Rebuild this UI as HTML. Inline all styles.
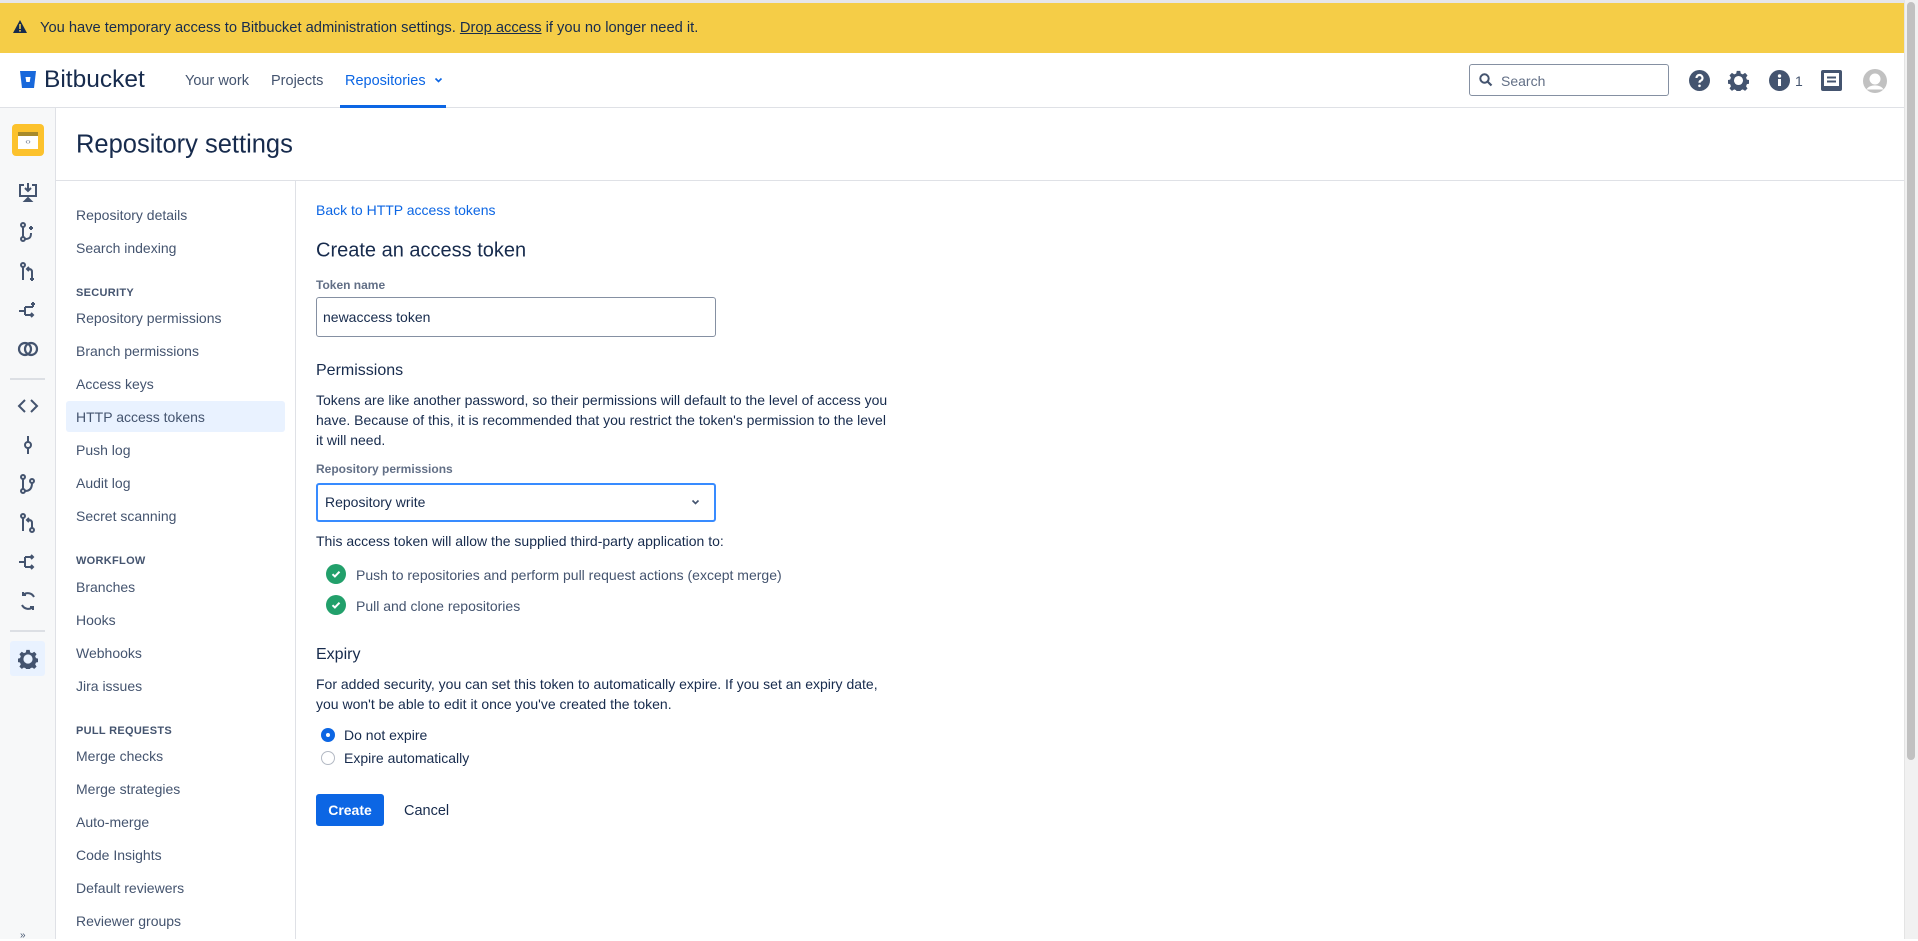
<!DOCTYPE html>
<html><head><meta charset="utf-8"><style>
*{box-sizing:border-box;margin:0;padding:0}
body{width:1918px;height:939px;overflow:hidden;position:relative;background:#fff;font-family:"Liberation Sans",sans-serif;color:#172b4d;font-size:14px}
.a{position:absolute;white-space:nowrap}
.c{transform:translateY(-50%)}
.nav{color:#44546f;font-size:14px}
.sec{color:#44546f;font-size:11px;font-weight:bold;letter-spacing:.3px}
</style></head><body>
<div class="a" style="left:0;top:0;width:1904px;height:3px;background:#e6e6ea"></div>
<div class="a" style="left:0;top:3px;width:1904px;height:50px;background:#f5cd47"></div>
<svg class="a" style="left:13px;top:20px" width="14" height="13" viewBox="0 0 14 13"><path d="M7 0 L14 13 H0 Z" fill="#172b4d"/><rect x="6.2" y="4" width="1.6" height="5" fill="#f5cd47"/><rect x="6.2" y="10" width="1.6" height="1.6" fill="#f5cd47"/></svg>
<div class="a c" style="left:40px;top:28px;font-size:14.7px;color:#172b4d">You have temporary access to Bitbucket administration settings. <u>Drop access</u> if you no longer need it.</div>
<div class="a" style="left:0;top:107px;width:1904px;height:1px;background:#dfe1e6"></div>
<svg class="a" style="left:20px;top:71px" width="16" height="17" viewBox="0 0 16 17"><path d="M0 0 H16 L14 17 H2 Z" fill="#1868db"/><path d="M5.5 6 H10.5 L9.7 11 H6.3 Z" fill="#fff"/></svg>
<div class="a c" style="left:44px;top:80px;font-size:24.5px;color:#172b4d">Bitbucket</div>
<div class="a c nav" style="left:185px;top:81px;font-size:14.5px">Your work</div>
<div class="a c nav" style="left:271px;top:81px;font-size:14.5px">Projects</div>
<div class="a c" style="left:345px;top:81px;font-size:14.5px;color:#0c66e4">Repositories</div>
<svg class="a" style="left:434px;top:77px" width="9" height="7" viewBox="0 0 9 7"><path d="M1.5 1.5 L4.5 4.5 L7.5 1.5" stroke="#0c66e4" stroke-width="1.6" fill="none"/></svg>
<div class="a" style="left:340px;top:105px;width:106px;height:3px;background:#0c66e4"></div>
<div class="a" style="left:1469px;top:64px;width:200px;height:32px;border:1px solid #8590a2;border-radius:3px"></div>
<svg class="a" style="left:1479px;top:73px" width="14" height="14" viewBox="0 0 14 14"><circle cx="5.5" cy="5.5" r="4.2" stroke="#44546f" stroke-width="2" fill="none"/><path d="M8.5 8.5 L12.5 12.5" stroke="#44546f" stroke-width="2.2"/></svg>
<div class="a c" style="left:1501px;top:81px;font-size:14px;color:#626f86">Search</div>
<svg class="a" style="left:1689px;top:70px" width="21" height="21" viewBox="0 0 21 21"><circle cx="10.5" cy="10.5" r="10.5" fill="#44546f"/><path d="M7.5 8 A3 3 0 1 1 11.5 10.8 C10.6 11.3 10.5 11.8 10.5 12.8" stroke="#fff" stroke-width="2.2" fill="none"/><circle cx="10.5" cy="15.8" r="1.3" fill="#fff"/></svg>
<svg class="a" style="left:1728px;top:70px" width="21" height="21" viewBox="0 0 24 24"><path d="M10 1h4l.6 3 2.3 1 2.6-1.7 2.8 2.8-1.7 2.6 1 2.3 3 .6v4l-3 .6-1 2.3 1.7 2.6-2.8 2.8-2.6-1.7-2.3 1-.6 3h-4l-.6-3-2.3-1-2.6 1.7-2.8-2.8 1.7-2.6-1-2.3-3-.6v-4l3-.6 1-2.3-1.7-2.6 2.8-2.8 2.6 1.7 2.3-1z" fill="#44546f"/><circle cx="12" cy="12" r="5.2" fill="#fff"/></svg>
<svg class="a" style="left:1769px;top:70px" width="21" height="21" viewBox="0 0 21 21"><circle cx="10.5" cy="10.5" r="10.5" fill="#44546f"/><rect x="9" y="9" width="3" height="7" fill="#fff"/><circle cx="10.5" cy="6" r="1.7" fill="#fff"/></svg>
<div class="a c" style="left:1795px;top:81px;font-size:14px;color:#44546f">1</div>
<svg class="a" style="left:1821px;top:70px" width="21" height="21" viewBox="0 0 21 21"><rect x="0" y="0" width="21" height="21" rx="2" fill="#44546f"/><rect x="3" y="3" width="15" height="13" fill="#fff"/><rect x="6" y="6.5" width="9" height="2" fill="#44546f"/><rect x="6" y="10.5" width="9" height="2" fill="#44546f"/></svg>
<svg class="a" style="left:1863px;top:69px" width="24" height="24" viewBox="0 0 24 24"><circle cx="12" cy="12" r="12" fill="#c1c1c1"/><circle cx="12" cy="10" r="5.5" fill="#fff"/><path d="M3.5 20.5 C6 15 18 15 20.5 20.5" fill="#fff"/></svg>
<div class="a" style="left:1904px;top:0;width:14px;height:939px;background:#f1f1f1;border-left:1px solid #e4e4e4"></div>
<div class="a" style="left:1907px;top:2px;width:8px;height:758px;background:#c1c1c1;border-radius:4px"></div>
<div class="a" style="left:0;top:108px;width:56px;height:831px;background:#f7f8f9;border-right:1px solid #dfe1e6"></div>
<div class="a" style="left:12px;top:124px;width:32px;height:32px;background:#fcc22d;border-radius:4px"></div>
<div class="a" style="left:18px;top:132px;width:20px;height:17px;background:#fff;border-top:4px solid #a88a2a;font-size:8px;color:#626f86;text-align:center;line-height:12px">‹›</div>
<svg class="a" style="left:16px;top:181px" width="24" height="24" viewBox="0 0 24 24" fill="none" stroke="#44546f" stroke-width="2"><path d="M8 4H4v11h16V4h-4"/><path d="M12 2v8M9 7l3 3 3-3"/><path d="M9 20h6l-3-3z" fill="#44546f"/></svg>
<svg class="a" style="left:16px;top:220px" width="24" height="24" viewBox="0 0 24 24" fill="none" stroke="#44546f" stroke-width="2"><circle cx="7" cy="5" r="2"/><circle cx="7" cy="19" r="2"/><path d="M7 7v10M9 19c5 0 6-2 6-6"/><path d="M15 6v4M13 8h4"/></svg>
<svg class="a" style="left:16px;top:260px" width="24" height="24" viewBox="0 0 24 24" fill="none" stroke="#44546f" stroke-width="2"><circle cx="7" cy="5" r="2"/><path d="M7 7v13M16 20v-8c0-2-1-3-3-3h-2M13 7l-2 2 2 2M16 17v4M14 19h4"/></svg>
<svg class="a" style="left:16px;top:299px" width="24" height="24" viewBox="0 0 24 24" fill="none" stroke="#44546f" stroke-width="2"><path d="M3 12h6M9 8v8M9 8h8M9 16h8M17 3v5M15 5h4M15 14l2 2-2 2"/></svg>
<svg class="a" style="left:16px;top:337px" width="24" height="24" viewBox="0 0 24 24" fill="none" stroke="#44546f" stroke-width="2.2"><circle cx="9" cy="12" r="6"/><circle cx="15" cy="12" r="6"/></svg>
<div class="a" style="left:10px;top:378px;width:35px;height:2px;background:#dcdfe4"></div>
<svg class="a" style="left:16px;top:394px" width="24" height="24" viewBox="0 0 24 24" fill="none" stroke="#44546f" stroke-width="2"><path d="M9 6l-6 6 6 6M15 6l6 6-6 6"/></svg>
<svg class="a" style="left:16px;top:433px" width="24" height="24" viewBox="0 0 24 24" fill="none" stroke="#44546f" stroke-width="2"><circle cx="12" cy="12" r="3"/><path d="M12 3v6M12 15v6"/></svg>
<svg class="a" style="left:16px;top:472px" width="24" height="24" viewBox="0 0 24 24" fill="none" stroke="#44546f" stroke-width="2"><circle cx="7" cy="5" r="2"/><circle cx="7" cy="19" r="2"/><circle cx="16" cy="9" r="2"/><path d="M7 7v10M9 19c5 0 7-3 7-8"/></svg>
<svg class="a" style="left:16px;top:511px" width="24" height="24" viewBox="0 0 24 24" fill="none" stroke="#44546f" stroke-width="2"><circle cx="7" cy="5" r="2"/><circle cx="16" cy="19" r="2"/><path d="M7 7v13M16 17v-5c0-2-1-3-3-3h-2M13 7l-2 2 2 2"/></svg>
<svg class="a" style="left:16px;top:550px" width="24" height="24" viewBox="0 0 24 24" fill="none" stroke="#44546f" stroke-width="2"><path d="M3 12h6M9 7v10M9 7h8M9 17h8M15 5l2 2-2 2M15 15l2 2-2 2"/></svg>
<svg class="a" style="left:16px;top:589px" width="24" height="24" viewBox="0 0 24 24" fill="none" stroke="#44546f" stroke-width="2"><path d="M18 8a7 7 0 0 0-11-2M6 16a7 7 0 0 0 11 2M7 3v3h3M17 21v-3h-3"/></svg>
<div class="a" style="left:10px;top:630px;width:35px;height:2px;background:#dcdfe4"></div>
<div class="a" style="left:10px;top:641px;width:35px;height:35px;background:#e9f2ff;border-radius:3px"></div>
<svg class="a" style="left:18px;top:649px" width="20" height="20" viewBox="0 0 24 24"><path d="M10 1h4l.6 3 2.3 1 2.6-1.7 2.8 2.8-1.7 2.6 1 2.3 3 .6v4l-3 .6-1 2.3 1.7 2.6-2.8 2.8-2.6-1.7-2.3 1-.6 3h-4l-.6-3-2.3-1-2.6 1.7-2.8-2.8 1.7-2.6-1-2.3-3-.6v-4l3-.6 1-2.3-1.7-2.6 2.8-2.8 2.6 1.7 2.3-1z" fill="#44546f"/><circle cx="12" cy="12" r="5.5" fill="#e9f2ff"/></svg>
<div class="a" style="left:20px;top:934px;width:16px;height:5px;font-size:10px;color:#44546f;line-height:4px">» </div>
<div class="a c" style="left:76px;top:145px;font-size:25.5px;color:#172b4d">Repository settings</div>
<div class="a" style="left:56px;top:180px;width:1848px;height:1px;background:#dfe1e6"></div>
<div class="a" style="left:295px;top:181px;width:1px;height:758px;background:#dfe1e6"></div>
<div class="a" style="left:66px;top:401px;width:219px;height:31px;background:#e9f2ff;border-radius:3px"></div>
<div class="a c nav" style="left:76px;top:215px">Repository details</div>
<div class="a c nav" style="left:76px;top:248px">Search indexing</div>
<div class="a c sec" style="left:76px;top:293px">SECURITY</div>
<div class="a c nav" style="left:76px;top:318px">Repository permissions</div>
<div class="a c nav" style="left:76px;top:351px">Branch permissions</div>
<div class="a c nav" style="left:76px;top:384px">Access keys</div>
<div class="a c nav" style="left:76px;top:417px">HTTP access tokens</div>
<div class="a c nav" style="left:76px;top:450px">Push log</div>
<div class="a c nav" style="left:76px;top:483px">Audit log</div>
<div class="a c nav" style="left:76px;top:516px">Secret scanning</div>
<div class="a c sec" style="left:76px;top:561px">WORKFLOW</div>
<div class="a c nav" style="left:76px;top:587px">Branches</div>
<div class="a c nav" style="left:76px;top:620px">Hooks</div>
<div class="a c nav" style="left:76px;top:653px">Webhooks</div>
<div class="a c nav" style="left:76px;top:686px">Jira issues</div>
<div class="a c sec" style="left:76px;top:731px">PULL REQUESTS</div>
<div class="a c nav" style="left:76px;top:756px">Merge checks</div>
<div class="a c nav" style="left:76px;top:789px">Merge strategies</div>
<div class="a c nav" style="left:76px;top:822px">Auto-merge</div>
<div class="a c nav" style="left:76px;top:855px">Code Insights</div>
<div class="a c nav" style="left:76px;top:888px">Default reviewers</div>
<div class="a c nav" style="left:76px;top:921px">Reviewer groups</div>
<div class="a c" style="left:316px;top:210px;color:#0c66e4;font-size:14px">Back to HTTP access tokens</div>
<div class="a c" style="left:316px;top:251px;font-size:20px">Create an access token</div>
<div class="a c" style="left:316px;top:285px;font-size:12px;font-weight:bold;color:#626f86">Token name</div>
<div class="a" style="left:316px;top:297px;width:400px;height:40px;border:1px solid #8590a2;border-radius:3px"></div>
<div class="a c" style="left:323px;top:317px;font-size:14px">newaccess token</div>
<div class="a c" style="left:316px;top:371px;font-size:16px">Permissions</div>
<div class="a" style="left:316px;top:390px;width:576px;font-size:14px;line-height:20px;white-space:normal">Tokens are like another password, so their permissions will default to the level of access you have. Because of this, it is recommended that you restrict the token's permission to the level it will need.</div>
<div class="a c" style="left:316px;top:469px;font-size:12px;font-weight:bold;color:#626f86">Repository permissions</div>
<div class="a" style="left:316px;top:483px;width:400px;height:39px;border:2px solid #388bff;border-radius:3px"></div>
<div class="a c" style="left:325px;top:502px;font-size:14px">Repository write</div>
<svg class="a" style="left:691px;top:499px" width="9" height="7" viewBox="0 0 9 7"><path d="M1.5 1.5 L4.5 4.5 L7.5 1.5" stroke="#44546f" stroke-width="1.6" fill="none"/></svg>
<div class="a c" style="left:316px;top:541px;font-size:14px">This access token will allow the supplied third-party application to:</div>
<svg class="a" style="left:326px;top:564px" width="20" height="20" viewBox="0 0 20 20"><circle cx="10" cy="10" r="10" fill="#22a06b"/><path d="M6.5 10.2l2.4 2.3 4.6-4.8" stroke="#fff" stroke-width="2" fill="none"/></svg>
<div class="a c" style="left:356px;top:575px;font-size:14px;color:#44546f">Push to repositories and perform pull request actions (except merge)</div>
<svg class="a" style="left:326px;top:595px" width="20" height="20" viewBox="0 0 20 20"><circle cx="10" cy="10" r="10" fill="#22a06b"/><path d="M6.5 10.2l2.4 2.3 4.6-4.8" stroke="#fff" stroke-width="2" fill="none"/></svg>
<div class="a c" style="left:356px;top:606px;font-size:14px;color:#44546f">Pull and clone repositories</div>
<div class="a c" style="left:316px;top:655px;font-size:16px">Expiry</div>
<div class="a" style="left:316px;top:674px;width:576px;font-size:14px;line-height:20px;white-space:normal">For added security, you can set this token to automatically expire. If you set an expiry date, you won't be able to edit it once you've created the token.</div>
<div class="a" style="left:321px;top:728px;width:14px;height:14px;border-radius:50%;background:#0c66e4"></div>
<div class="a" style="left:326px;top:733px;width:4px;height:4px;border-radius:50%;background:#fff"></div>
<div class="a c" style="left:344px;top:735px;font-size:14px">Do not expire</div>
<div class="a" style="left:321px;top:751px;width:14px;height:14px;border-radius:50%;border:1px solid #b3b9c4;background:#fff"></div>
<div class="a c" style="left:344px;top:758px;font-size:14px">Expire automatically</div>
<div class="a" style="left:316px;top:794px;width:68px;height:32px;background:#0c66e4;border-radius:3px;color:#fff;font-weight:bold;font-size:14px;text-align:center;line-height:32px">Create</div>
<div class="a c" style="left:404px;top:811px;font-size:14.5px;color:#172b4d">Cancel</div>
</body></html>
